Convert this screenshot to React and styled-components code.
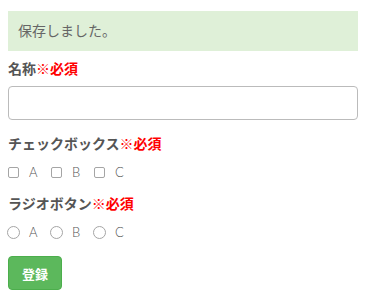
import React from 'react';
import styled, { createGlobalStyle } from 'styled-components';

const GlobalStyle = createGlobalStyle`
    body {
        margin: 0;
        background: #fff;
        font-family: "Lato", "Noto Sans CJK JP", sans-serif;
        color: #555;
    }
`;

const Page = styled.div`
    width: 350px;
    padding: 11px 14px 0 8px;
`;

const Alert = styled.div`
    background-color: #dff0d8;
    color: #666;
    height: 40px;
    line-height: 40px;
    padding: 0 10px;
    font-size: 14px;
    margin-bottom: 8px;
`;

const Group = styled.div`
    margin-bottom: ${props => props.$gap || 0}px;
`;

const Label = styled.div`
    font-size: 14px;
    font-weight: bold;
    line-height: 20px;
    color: #555;
    margin-bottom: ${props => props.$gap || 0}px;
`;

const Required = styled.span`
    color: #ff0000;
`;

const TextInput = styled.input`
    display: block;
    box-sizing: border-box;
    width: 350px;
    height: 34px;
    border: 1px solid #bbb;
    border-radius: 4px;
    padding: 0 10px;
    margin: 0;
`;

const Options = styled.div`
    display: flex;
    align-items: center;
    height: 20px;
`;

const Option = styled.label`
    display: flex;
    align-items: center;
    width: 43px;
    font-size: 13px;
    font-weight: 300;
    color: #555;
`;

const Check = styled.input`
    appearance: none;
    box-sizing: border-box;
    width: 11px;
    height: 11px;
    margin: 0 10px 0 0;
    border: 1px solid #a5a5a5;
    border-radius: 2px;
    background: #fff;
    ${props => props.type === 'radio' && `
        width: 13px;
        height: 13px;
        margin: 0 9px 0 -1px;
        border-radius: 50%;
    `}
`;

const Button = styled.button`
    width: 54px;
    height: 34px;
    background-color: #5cb85c;
    border: 1px solid #4cae4c;
    border-radius: 4px;
    color: #fff;
    font-size: 13px;
    font-weight: bold;
    font-family: "Noto Sans CJK JP", sans-serif;
    padding: 0;
`;

function App() {
    const opts = ['A', 'B', 'C'];
    return (
        <Page>
            <GlobalStyle />
            <Alert>保存しました。</Alert>
            <Group $gap={14}>
                <Label $gap={7}>名称<Required>※必須</Required></Label>
                <TextInput type="text" />
            </Group>
            <Group $gap={12}>
                <Label $gap={8}>チェックボックス<Required>※必須</Required></Label>
                <Options>
                    {opts.map(o => (
                        <Option key={o}><Check type="checkbox" />{o}</Option>
                    ))}
                </Options>
            </Group>
            <Group $gap={14}>
                <Label $gap={8}>ラジオボタン<Required>※必須</Required></Label>
                <Options>
                    {opts.map(o => (
                        <Option key={o}><Check type="radio" name="r" />{o}</Option>
                    ))}
                </Options>
            </Group>
            <Button>登録</Button>
        </Page>
    );
}

export default App;
